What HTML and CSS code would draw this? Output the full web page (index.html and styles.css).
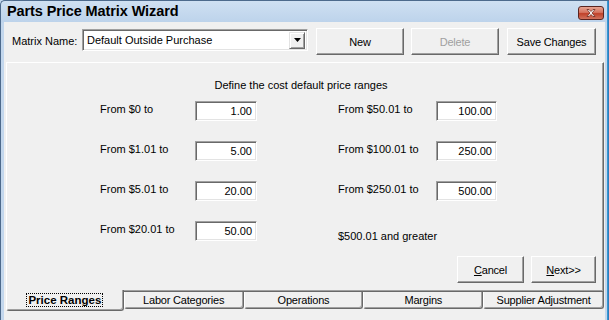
FILE: index.html
```html
<!DOCTYPE html>
<html lang="en">
<head>
    <meta charset="UTF-8">
    <title>Parts Price Matrix Wizard</title>
    <link rel="stylesheet" href="styles.css">
</head>
<body>
    <div class="window">
        <div class="titlebar">
            <span class="title">Parts Price Matrix Wizard</span>
            <span class="close">
                <svg width="26" height="14" viewBox="0 0 26 14">
                    <path d="M9 3.5 L11 3.5 L13 5.5 L15 3.5 L17 3.5 L14 7 L17 10.5 L15 10.5 L13 8.5 L11 10.5 L9 10.5 L12 7 Z" fill="#fff" stroke="#6b2a20" stroke-width="0.8"/>
                </svg>
            </span>
        </div>
        <div class="client">
            <div class="toolbar">
                <label class="name-label">Matrix Name:</label>
                <div class="combo">
                    <span class="combo-text">Default Outside Purchase</span>
                    <span class="combo-btn">
                        <svg width="7" height="4" viewBox="0 0 7 4"><path d="M0 0 H7 L3.5 4 Z" fill="#000"/></svg>
                    </span>
                </div>
                <button class="btn btn-new">New</button>
                <button class="btn btn-delete" disabled>Delete</button>
                <button class="btn btn-save">Save Changes</button>
            </div>

            <div class="panel">
                <p class="intro">Define the cost default price ranges</p>
                <div class="ranges">
                    <span class="range-label">From $0 to</span>
                    <span class="amount">1.00</span>
                    <span class="range-label right">From $50.01 to</span>
                    <span class="amount">100.00</span>

                    <span class="range-label">From $1.01 to</span>
                    <span class="amount">5.00</span>
                    <span class="range-label right">From $100.01 to</span>
                    <span class="amount">250.00</span>

                    <span class="range-label">From $5.01 to</span>
                    <span class="amount">20.00</span>
                    <span class="range-label right">From $250.01 to</span>
                    <span class="amount">500.00</span>

                    <span class="range-label">From $20.01 to</span>
                    <span class="amount">50.00</span>
                    <span class="range-label right greater">$500.01 and greater</span>
                </div>
                <div class="actions">
                    <button class="btn btn-cancel"><u>C</u>ancel</button>
                    <button class="btn btn-next"><u>N</u>ext&gt;&gt;</button>
                </div>
            </div>

            <div class="tabs">
                <div class="tab active"><span class="focus">Price Ranges</span></div>
                <div class="tab">Labor Categories</div>
                <div class="tab">Operations</div>
                <div class="tab">Margins</div>
                <div class="tab last">Supplier Adjustment</div>
            </div>
        </div>
    </div>
</body>
</html>
```

FILE: styles.css
```css
body {
    margin: 0;
    width: 609px;
    height: 320px;
    overflow: hidden;
    background-color: #c3d7ed;
    font-family: "Liberation Sans", Arial, sans-serif;
    font-size: 11px;
    color: #000;
}
.window {
    display: flex;
    flex-direction: column;
    height: 320px;
    border-left: 1px solid #4d6a8c;
    border-top: 1px solid #4d6a8c;
    border-top-left-radius: 5px;
    box-sizing: border-box;
    padding-left: 3px;
    padding-right: 3px;
    background: linear-gradient(to bottom, #cfe0f2 0px, #bdd3eb 21px, #c3d7ed 22px);
    position: relative;
}
.window::after {
    content: "";
    position: absolute;
    top: 0;
    right: 0;
    width: 2px;
    height: 320px;
    background: linear-gradient(to right, #3aa6e0, #2a6fb0);
}
.titlebar {
    height: 21px;
    display: flex;
    align-items: center;
    justify-content: space-between;
    padding-left: 3px;
    padding-right: 2px;
}
.title {
    font-weight: bold;
    font-size: 14.5px;
    letter-spacing: -0.1px;
    margin-top: -1px;
}
.close {
    display: block;
    width: 26px;
    height: 14px;
    margin-top: 2px;
    border: 1px solid #5a2420;
    border-radius: 3px;
    box-sizing: border-box;
    background: linear-gradient(to bottom, #e8a493 0%, #d57460 45%, #c0412a 55%, #d1735e 100%);
    overflow: hidden;
}
.close svg {
    display: block;
    margin: -1px 0 0 -1px;
}
.client {
    flex: 1;
    display: flex;
    flex-direction: column;
    background-color: #f0f0f0;
    padding: 0 1px;
    margin-right: 1px;
}
.toolbar {
    height: 40px;
    display: flex;
    align-items: flex-start;
    padding-top: 6px;
    padding-left: 7px;
    box-sizing: border-box;
}
.name-label {
    width: 70px;
    margin-top: 7px;
}
.combo {
    width: 226px;
    height: 22px;
    margin-top: 1px;
    margin-right: 8px;
    display: flex;
    align-items: center;
    justify-content: space-between;
    background: #fff;
    box-sizing: border-box;
    border: 1px solid;
    border-color: #a0a0a0 #fff #fff #a0a0a0;
    box-shadow: inset 1px 1px #696969, inset -1px -1px #e3e3e3;
    padding: 2px 2px 2px 4px;
}
.combo-btn {
    width: 16px;
    height: 17px;
    box-sizing: border-box;
    background: #f0f0f0;
    border: 1px solid;
    border-color: #e3e3e3 #696969 #696969 #e3e3e3;
    box-shadow: inset 1px 1px #fff, inset -1px -1px #a0a0a0;
    display: flex;
    align-items: center;
    justify-content: center;
}
.combo-btn svg {
    display: block;
}
.btn {
    height: 27px;
    font-family: "Liberation Sans", Arial, sans-serif;
    font-size: 11px;
    letter-spacing: -0.2px;
    color: #000;
    background: #f0f0f0;
    border: 1px solid;
    border-color: #fff #696969 #696969 #fff;
    box-shadow: inset -1px -1px #a0a0a0;
    padding: 0;
    box-sizing: border-box;
}
.btn-new {
    width: 88px;
    margin-right: 7px;
}
.btn-delete {
    width: 88px;
    margin-right: 8px;
    color: #a0a0a0;
}
.btn-save {
    width: 89px;
}
.panel {
    height: 230px;
    margin: 0 0 0 1px;
    box-sizing: border-box;
    border: 1px solid;
    border-color: #fff #696969 #696969 #fff;
    box-shadow: inset -1px -1px #a0a0a0;
    display: flex;
    flex-direction: column;
}
.intro {
    margin: 16px 0 0 0;
    text-align: center;
    line-height: 13px;
    padding-right: 8px;
}
.ranges {
    display: grid;
    grid-template-columns: 95px 62px 179px 61px;
    grid-auto-rows: 20px;
    row-gap: 20px;
    margin-top: 9px;
    margin-left: 93px;
    align-items: start;
}
.range-label {
    line-height: 14px;
    padding-top: 1px;
}
.range-label.right {
    padding-left: 81px;
}
.range-label.greater {
    padding-top: 8px;
    white-space: nowrap;
}
.amount {
    height: 20px;
    box-sizing: border-box;
    background: #fff;
    border: 1px solid;
    border-color: #a0a0a0 #fff #fff #a0a0a0;
    box-shadow: inset 1px 1px #696969, inset -1px -1px #e3e3e3;
    text-align: right;
    line-height: 19px;
    padding-right: 4px;
}
.actions {
    display: flex;
    justify-content: flex-end;
    gap: 7px;
    margin-top: 15px;
    padding-right: 7px;
}
.btn-cancel {
    width: 67px;
}
.btn-next {
    width: 65px;
}
.tabs {
    display: flex;
    height: 20px;
    margin-left: 1px;
}
.tab {
    width: 120px;
    height: 17px;
    box-sizing: border-box;
    border: 1px solid;
    border-top: none;
    border-color: #fff #696969 #696969 #fff;
    border-bottom-left-radius: 3px;
    border-bottom-right-radius: 3px;
    box-shadow: inset -1px -1px #a0a0a0;
    text-align: center;
    line-height: 17px;
    letter-spacing: -0.2px;
}
.tab.active {
    width: 118px;
    height: 21px;
    margin-top: -2px;
    background: #f0f0f0;
    position: relative;
    z-index: 1;
    line-height: 20px;
    font-weight: bold;
    font-size: 11.5px;
    letter-spacing: 0;
}
.tab.last {
    width: 121px;
}
.focus {
    border: 1px dotted #000;
    padding: 0 1px;
}
```
